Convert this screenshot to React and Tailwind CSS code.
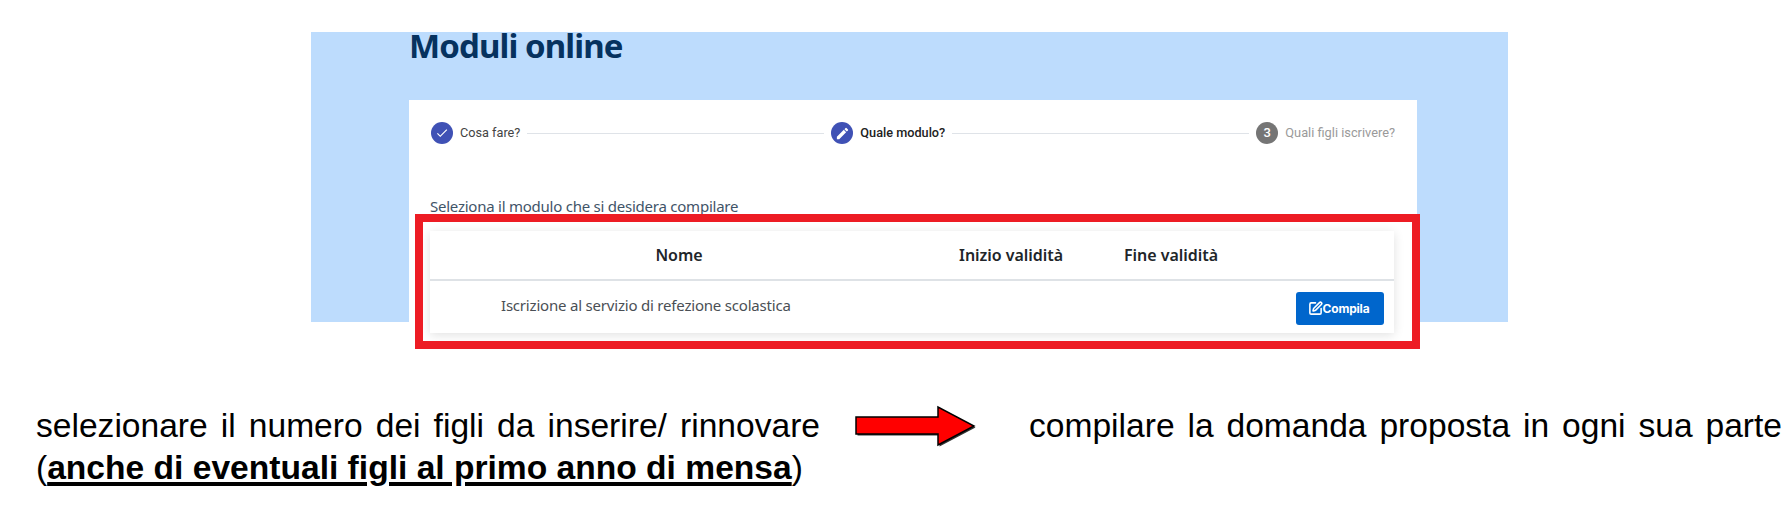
import React from "react";
import { SquarePen } from "lucide-react";

const titillium = "font-['Noto_Sans','Open_Sans',sans-serif]";

function Step({ icon, label, labelClass }) {
  return (
    <div className="flex items-center gap-[7px] shrink-0">
      {icon}
      <span className={`font-['Roboto',sans-serif] leading-[22px] ${labelClass}`}>{label}</span>
    </div>
  );
}

function Circle({ children, bg }) {
  return (
    <span className={`flex h-[22px] w-[22px] items-center justify-center rounded-full text-white ${bg}`}>{children}</span>
  );
}

function Line() {
  return <div className="h-px flex-1 bg-[#dfe3e8] mx-[7px]" />;
}

export default function App() {
  return (
    <div className="relative h-[512px] w-[1790px] overflow-hidden bg-white pt-[32px] font-['Liberation_Sans',sans-serif]">
      <section className="ml-[311px] h-[290px] w-[1197px] bg-[#bddcfd] pl-[98px]">
        <h1 className={`h-[68px] text-[33px] font-bold leading-[27px] tracking-[-0.9px] text-[#06325f] ${titillium}`}>Moduli online</h1>
        <div className="relative h-[249px] w-[1008px] bg-white pl-[21px] pr-[23px] pt-[22px]">
          <div className="flex items-center ml-[1px] mr-[-1px]">
            <Step
              icon={
                <Circle bg="bg-[#3f51b5]">
                  <svg width="14" height="14" viewBox="0 0 24 24" fill="currentColor"><path d="M9 16.17L4.83 12l-1.42 1.41L9 19 21 7l-1.41-1.41z" /></svg>
                </Circle>
              }
              label="Cosa fare?"
              labelClass="text-[12.7px] text-[#444]"
            />
            <Line />
            <Step
              icon={
                <Circle bg="bg-[#3f51b5]">
                  <svg width="15" height="15" viewBox="0 0 24 24" fill="currentColor"><path d="M3 17.25V21h3.75L17.81 9.94l-3.75-3.75L3 17.25zM20.71 7.04a1 1 0 0 0 0-1.41l-2.34-2.34a1 1 0 0 0-1.41 0l-1.83 1.83 3.75 3.75 1.83-1.83z" /></svg>
                </Circle>
              }
              label="Quale modulo?"
              labelClass="text-[12.7px] font-medium text-[#222]"
            />
            <Line />
            <Step
              icon={<Circle bg="bg-[#757575]"><span className="font-['Roboto',sans-serif] text-[13px] font-medium">3</span></Circle>}
              label="Quali figli iscrivere?"
              labelClass="text-[12.8px] text-[#9a9a9a]"
            />
          </div>
          <p className={`mt-[52px] text-[15px] leading-[20px] tracking-[-0.24px] text-[#3f5468] ${titillium}`}>Seleziona il modulo che si desidera compilare</p>
          <div className={`mt-[15px] bg-white shadow-[0_2px_10px_rgba(0,0,0,0.12)] ${titillium}`}>
            <div className="grid h-[50px] grid-cols-[498px_161px_165px_1fr] items-center border-b-2 border-[#dee2e6] text-[16px] font-semibold tracking-[-0.03px] text-[#212529]">
              <div className="text-center">Nome</div>
              <div className="pl-[31px]">Inizio validità</div>
              <div className="pl-[35px]">Fine validità</div>
              <div />
            </div>
            <div className="flex h-[52px] items-center justify-between pl-[71px] pr-[10px] text-[15px] tracking-[-0.2px] text-[#4a4f55]">
              <span className="mb-[4px]">Iscrizione al servizio di refezione scolastica</span>
              <button className="mt-[3px] flex h-[33px] w-[88px] items-center justify-center rounded-[3px] bg-[#0066cc] pr-[3px] font-['Inter',sans-serif] text-[12px] font-bold tracking-[-0.2px] text-white">
                <SquarePen size={15} strokeWidth={2.5} />
                Compila
              </button>
            </div>
          </div>
          <div className="absolute left-[6px] top-[114px] h-[135px] w-[1005px] border-8 border-[#ed1c24]" />
        </div>
      </section>

      <div className="mt-[83px] flex items-start text-[33.6px] leading-[42px] text-black">
        <div className="ml-[36px] w-[784px]">
          <p className="[text-align-last:justify]">selezionare il numero dei figli da inserire/ rinnovare</p>
          <p>
            (<strong className="font-bold underline decoration-[4px] underline-offset-[3px]">anche di eventuali figli al primo anno di mensa</strong>)
          </p>
        </div>
        <svg className="ml-[34px] mt-0 shrink-0" width="124" height="44" viewBox="0 0 124 44">
          <path d="M2 12H84V2L120 21L84 40V29H2Z" fill="#333" transform="translate(1.5 1.5)" />
          <path d="M2 12H84V2L120 21L84 40V29H2Z" fill="#ff0000" stroke="#000" strokeWidth="1.5" />
        </svg>
        <p className="ml-[51px] w-[753px] [text-align-last:justify]">compilare la domanda proposta in ogni sua parte</p>
      </div>
    </div>
  );
}
